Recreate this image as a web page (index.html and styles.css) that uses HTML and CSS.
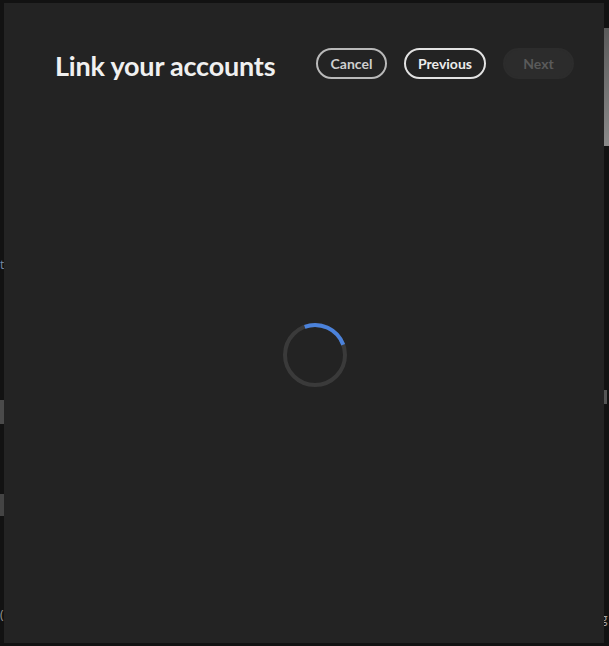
FILE: index.html
```html
<!DOCTYPE html>
<html lang="en">
<head>
<meta charset="utf-8">
<title>Link your accounts</title>
<link rel="stylesheet" href="styles.css">
</head>
<body>
<div class="backdrop">
  <span class="bg-bit bg-right-top"></span>
  <span class="bg-bit bg-left-1">t</span>
  <span class="bg-bit bg-left-2"></span>
  <span class="bg-bit bg-left-3"></span>
  <span class="bg-bit bg-left-4">(</span>
  <span class="bg-bit bg-right-2"></span>
  <span class="bg-bit bg-right-3">g</span>
</div>
<div class="dialog">
  <header class="dialog-header">
    <h1 class="title">Link your accounts</h1>
    <div class="actions">
      <button class="btn btn-secondary">Cancel</button>
      <button class="btn btn-primary">Previous</button>
      <button class="btn btn-disabled" disabled>Next</button>
    </div>
  </header>
  <main class="dialog-body">
    <svg class="spinner" width="66" height="66" viewBox="0 0 66 66">
      <circle cx="33" cy="33" r="30" fill="none" stroke="#3a3a3a" stroke-width="4"/>
      <path d="M 22.74 4.81 A 30 30 0 0 1 61.19 22.74" fill="none" stroke="#4b82db" stroke-width="4"/>
    </svg>
  </main>
</div>
</body>
</html>
```

FILE: styles.css
```css
html, body {
  margin: 0;
  padding: 0;
  width: 609px;
  height: 646px;
  overflow: hidden;
  background: #121212;
  font-family: "Open Sans", "Noto Sans", sans-serif;
}

.backdrop {
  position: absolute;
  inset: 0;
}

.bg-bit {
  position: absolute;
  color: #8a8a8a;
  font-family: "Open Sans", sans-serif;
  font-size: 12px;
  line-height: 14px;
}

.bg-right-top {
  left: 604px;
  top: 28px;
  width: 6px;
  height: 118px;
  background: linear-gradient(#5a5a5a, #8a8a8a);
}

.bg-right-2 {
  left: 604px;
  top: 390px;
  width: 3px;
  height: 14px;
  background: #555;
}

.bg-right-3 {
  left: 601px;
  top: 612px;
  color: #aaa;
}

.bg-left-1 {
  left: 0;
  top: 258px;
  color: #7a8aa8;
}

.bg-left-2 {
  left: 0;
  top: 400px;
  width: 4px;
  height: 24px;
  background: #4a4a4a;
}

.bg-left-3 {
  left: 0;
  top: 494px;
  width: 4px;
  height: 22px;
  background: #444;
}

.bg-left-4 {
  left: 0;
  top: 608px;
  color: #999;
}

.dialog {
  position: absolute;
  left: 4px;
  top: 3px;
  width: 600px;
  height: 640px;
  background: #232323;
  display: flex;
  flex-direction: column;
  box-sizing: border-box;
  padding: 44px 30px 0 51px;
}

.dialog-header {
  display: flex;
  align-items: center;
  justify-content: space-between;
  height: 32px;
}

.title {
  margin: 0;
  font-family: "Lato", sans-serif;
  font-weight: 700;
  font-size: 27px;
  color: #f0f0f0;
  letter-spacing: -0.2px;
  position: relative;
  top: 2px;
}

.actions {
  display: flex;
  gap: 17px;
}

.btn {
  height: 31px;
  box-sizing: border-box;
  border-radius: 16px;
  padding: 0;
  font-family: "Lato", sans-serif;
  font-weight: 700;
  font-size: 14px;
  background: transparent;
  cursor: pointer;
}

.btn-secondary {
  width: 71px;
  border: 2px solid #b9b9b9;
  color: #cfcfcf;
}

.btn-primary {
  width: 82px;
  border: 2px solid #e2e2e2;
  color: #ececec;
}

.btn-disabled {
  width: 71px;
  border: 2px solid #2c2c2c;
  background: #2c2c2c;
  color: #5a5a5a;
  cursor: default;
}

.dialog-body {
  flex: 1;
  display: flex;
  align-items: flex-start;
  justify-content: center;
}

.spinner {
  margin-top: 243px;
}
```
